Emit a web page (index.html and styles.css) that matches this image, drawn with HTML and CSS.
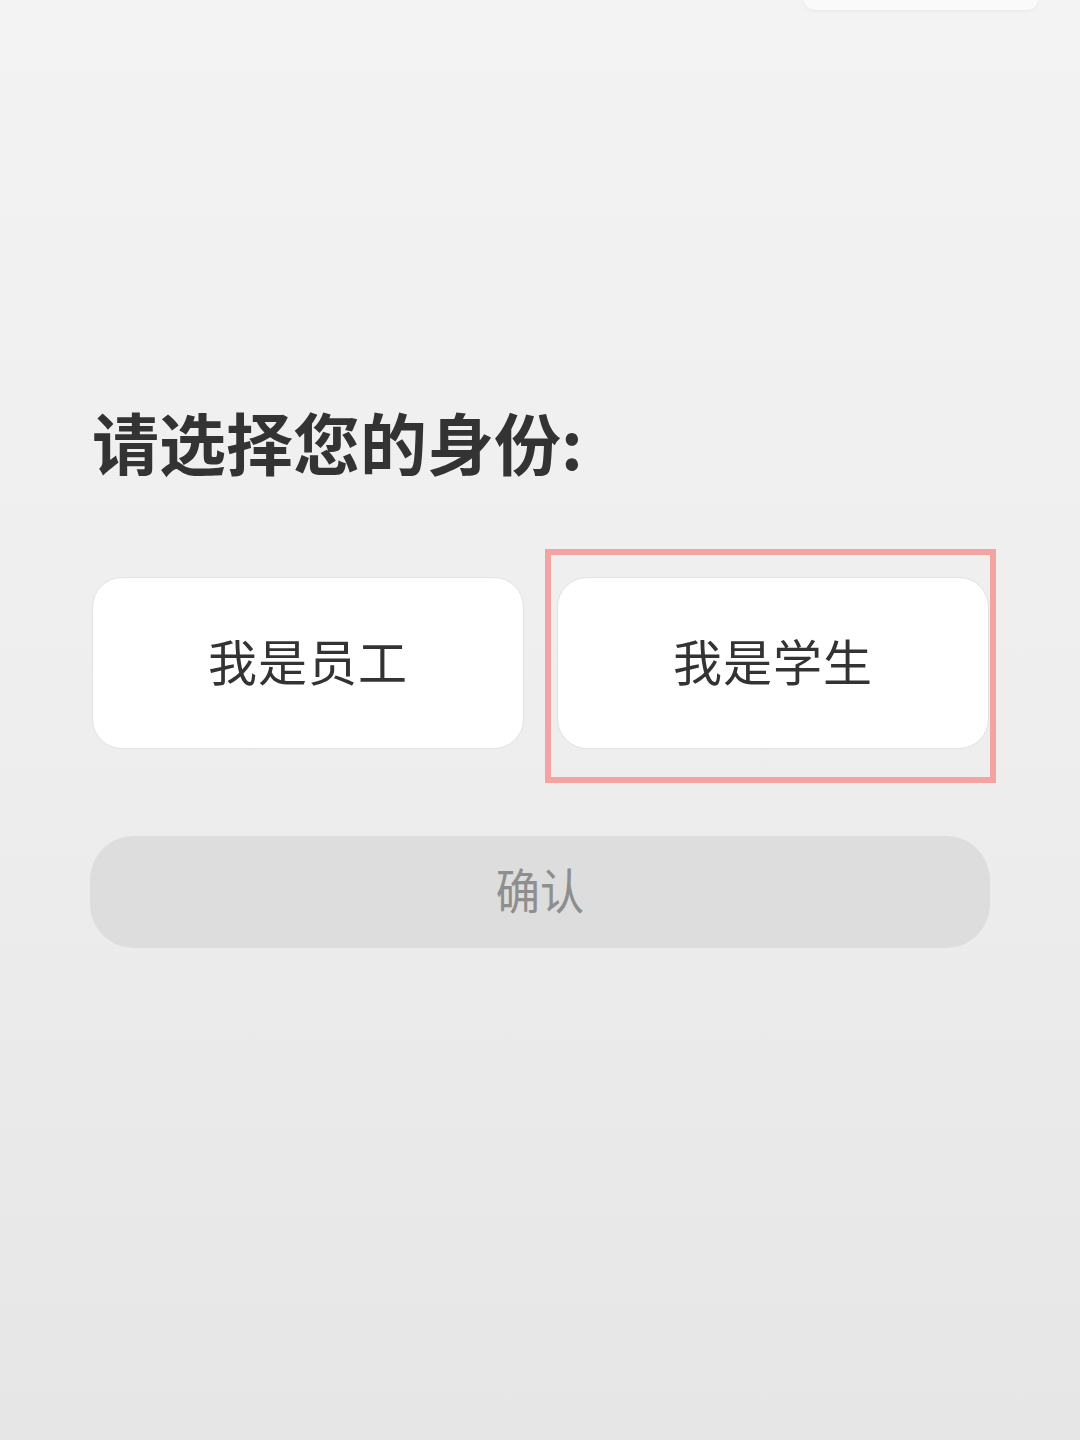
FILE: index.html
```html
<!DOCTYPE html>
<html lang="zh-CN">
<head>
<meta charset="utf-8">
<title>请选择您的身份</title>
<link rel="stylesheet" href="styles.css">
</head>
<body>
<div class="page">
  <div class="topbar">
    <div class="peek-card"></div>
  </div>
  <h1 class="title">请选择您的身份:</h1>
  <div class="options">
    <div class="option">我是员工</div>
    <div class="option selected">我是学生</div>
  </div>
  <div class="confirm"><span class="confirm-label">确认</span></div>
</div>
</body>
</html>
```

FILE: styles.css
```css
html, body {
  margin: 0;
  padding: 0;
}
body {
  width: 1080px;
  height: 1440px;
  background: linear-gradient(180deg, #f3f3f3 0%, #eeeeee 50%, #e6e6e6 100%);
  font-family: "Noto Sans CJK SC", "Noto Sans", sans-serif;
  overflow: hidden;
}
.page {
  display: flex;
  flex-direction: column;
  padding: 0 90px;
}
.topbar {
  display: flex;
  justify-content: flex-end;
  margin-right: -48px;
  height: 10px;
}
.peek-card {
  width: 234px;
  height: 10px;
  background: #fafafa;
  border-radius: 0 0 22px 22px;
  box-shadow: 0 1px 3px rgba(0,0,0,0.06);
}
.title {
  margin: 386px 0 0 2px;
  font-size: 67px;
  line-height: 90px;
  font-weight: 700;
  color: #333333;
  letter-spacing: 0;
}
.options {
  display: flex;
  gap: 33px;
  margin-top: 91px;
  padding-left: 2px;
}
.option {
  position: relative;
  width: 432px;
  height: 172px;
  box-sizing: border-box;
  padding-bottom: 7px;
  background: #ffffff;
  border: 1.5px solid #e2e2e2;
  border-radius: 30px;
  display: flex;
  align-items: center;
  justify-content: center;
  font-size: 49px;
  font-weight: 400;
  color: #333333;
  letter-spacing: 1px;
}
.option.selected::after {
  content: "";
  position: absolute;
  top: -29px;
  left: -13px;
  right: -8px;
  bottom: -35px;
  border: 6px solid #f4a3a3;
}
.confirm {
  margin-top: 87px;
  width: 900px;
  height: 112px;
  box-sizing: border-box;
  padding-bottom: 8px;
  background: #dddddd;
  border-radius: 44px;
  display: flex;
  align-items: center;
  justify-content: center;
  font-size: 48px;
  color: #8e8e8e;
}
.confirm-label {
  display: inline-block;
  transform: scaleX(0.92);
}
```
